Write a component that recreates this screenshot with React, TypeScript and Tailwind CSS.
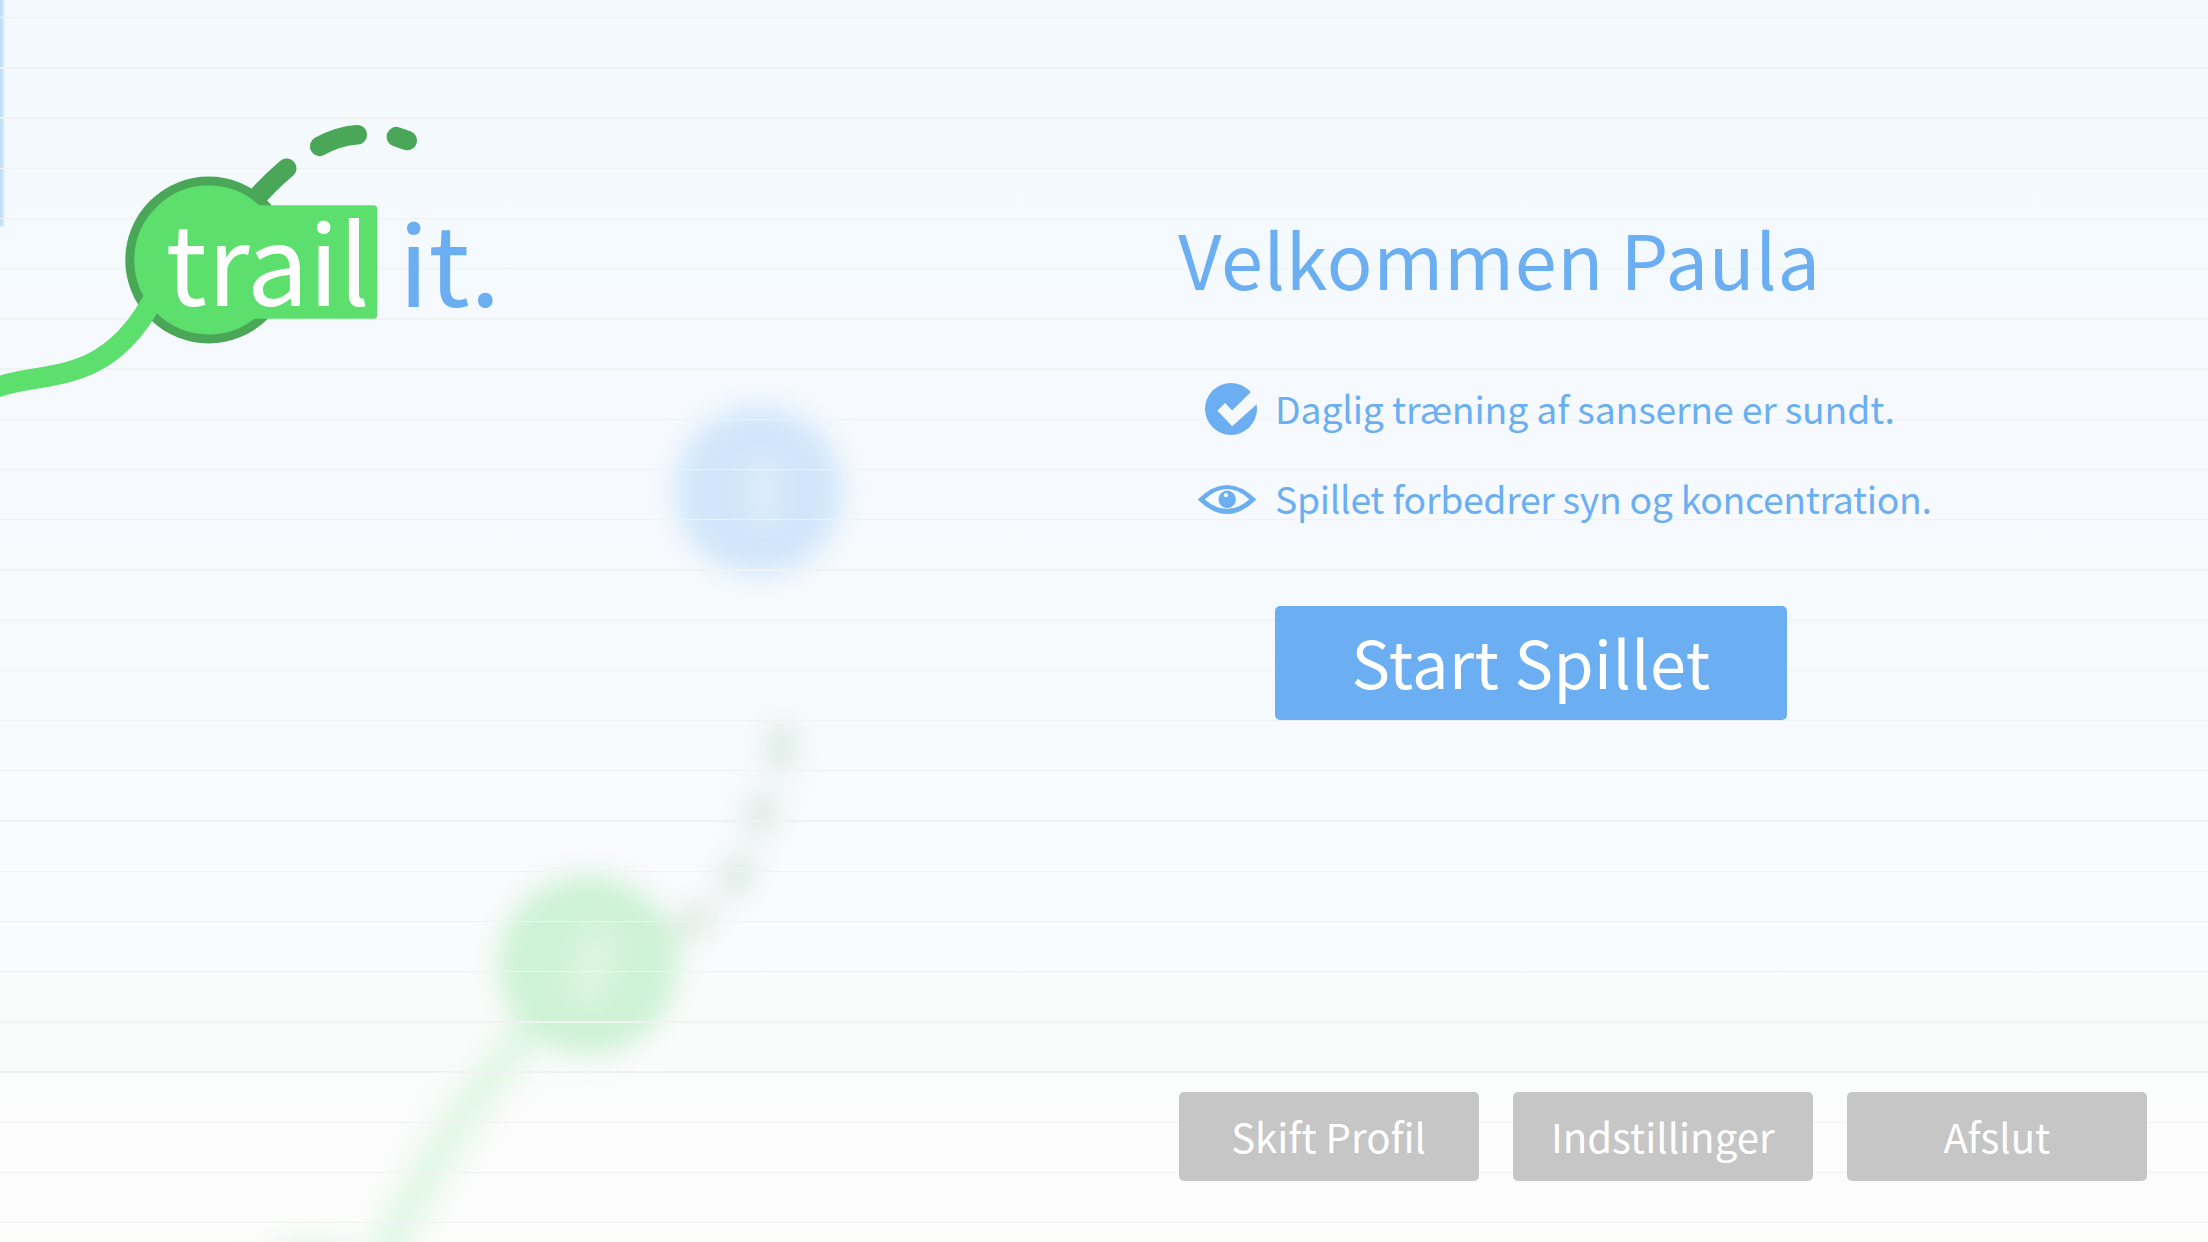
import React from "react";

const blue = "#6baff2";
const green = "#5cdf6d";
const dark = "#4aa757";

function Trail() {
  return (
    <svg className="absolute inset-0" width="2208" height="1242" viewBox="0 0 2208 1242" fill="none" aria-hidden="true">
      <defs>
        <filter id="soft" x="-20%" y="-20%" width="140%" height="140%" colorInterpolationFilters="sRGB">
          <feGaussianBlur stdDeviation="13" />
        </filter>
        <filter id="edge" x="-200%" y="-5%" width="500%" height="110%">
          <feGaussianBlur stdDeviation="1" />
        </filter>
      </defs>
      <g filter="url(#soft)">
        <path d="M672 936 L712 910" stroke="#e1ece5" strokeWidth="30" />
        <path d="M726 894 L748 856" stroke="#dbeae2" strokeWidth="27" />
        <path d="M754 834 L768 794" stroke="#dbeae2" strokeWidth="27" />
        <path d="M778 770 L784 726" stroke="#dbeae2" strokeWidth="28" />
        <path d="M550 1010 Q465 1090 379 1265" stroke="#e0f7e4" strokeWidth="35" />
        <circle cx="758.5" cy="491" r="84" fill="#d1e6fa" />
        <circle cx="588" cy="965" r="90" fill="#cef2d5" />
        <circle cx="312" cy="1328" r="84" fill="#d2f2d8" />
        <path d="M763 462 V522" stroke="#e0effa" strokeWidth="24" />
        <path d="M596 930 Q602 962 579 1000" stroke="#def5e1" strokeWidth="38" />
      </g>
      <rect x="-4" y="-4" width="7.5" height="230" fill="#bfdff7" filter="url(#edge)" />
    </svg>
  );
}

function Logo() {
  return (
    <div className="relative h-[420px] w-[560px] shrink-0">
      <svg className="absolute inset-0" width="560" height="420" viewBox="0 0 560 420" fill="none" aria-hidden="true">
        <g stroke={dark} strokeWidth="19.6" strokeLinecap="round">
          <path d="M250 205 Q268 184 286.7 168.3" />
          <path d="M319.7 146.3 Q338 136 357.3 134.7" />
          <path d="M396.3 136.7 L407.3 140.5" />
        </g>
        <circle cx="208.7" cy="260" r="78.9" fill={green} stroke={dark} strokeWidth="9" />
        <rect x="190" y="205.3" width="187.3" height="113.4" rx="4" fill={green} />
        <path d="M-12 391 C35 368 100 392 150 305 L160 290" stroke={green} strokeWidth="20.6" />
      </svg>
      <div className="absolute left-[165.5px] top-[188px] flex text-[110px] leading-[140px]">
        <span className="text-white">trail</span>
        <span className="ml-[28.5px] mt-px tracking-[-0.6px] text-[#6baff2]">it.</span>
      </div>
    </div>
  );
}

function CheckBadge() {
  return (
    <svg width="60" height="60" viewBox="1200 378 60 60" aria-hidden="true">
      <defs>
        <mask id="tick">
          <rect x="1190" y="370" width="90" height="90" fill="#fff" />
          <path d="M1262 381 L1232.2 410.5 L1225 403 L1217.4 410.7 L1232.2 426.2 L1268 394 Z" fill="#000" />
        </mask>
      </defs>
      <circle cx="1231" cy="408.9" r="26" fill={blue} mask="url(#tick)" />
    </svg>
  );
}

function Eye() {
  return (
    <svg className="overflow-visible" width="60" height="60" viewBox="1200 468 60 60" aria-hidden="true">
      <path
        fillRule="evenodd"
        fill={blue}
        d="M1197.7 499.5 Q1227 470.5 1256.3 499.5 Q1227 528.5 1197.7 499.5 Z M1204.8 499.5 Q1227 478.7 1249.4 499.5 Q1227 518.2 1204.8 499.5 Z"
      />
      <circle cx="1227.2" cy="499.3" r="8.7" fill={blue} />
      <circle cx="1226" cy="495.2" r="2.1" fill="#f5f9fe" />
    </svg>
  );
}

const notes = [
  { icon: <CheckBadge />, text: "Daglig træning af sanserne er sundt.", tracking: "tracking-[-0.18px]" },
  { icon: <Eye />, text: "Spillet forbedrer syn og koncentration.", tracking: "tracking-[-0.32px]" },
];

export default function App() {
  return (
    <div className="relative flex h-[1242px] w-[2208px] overflow-hidden bg-gradient-to-b from-[#f3f9fd] via-[#f7fafd] to-[#fcfcfb] font-['Noto_Sans_CJK_SC','Noto_Sans',sans-serif]">
      <Trail />
      <div className="absolute inset-0 bg-[repeating-linear-gradient(to_bottom,#f0f1f1_0px,#f0f1f1_1.3px,transparent_1.3px,transparent_50.21px)] bg-[position:0_16.5px] bg-no-repeat" />
      <div className="relative flex-1">
        <Logo />
      </div>
      <main className="relative flex w-[1030px] flex-col pr-[61px] pt-[209px]">
        <h1 className="whitespace-nowrap text-[75.6px] leading-[96px] tracking-[0.74px] text-[#6baff2] [word-spacing:-1.4px]">Velkommen Paula</h1>
        <ul className="mt-[73px] flex flex-col gap-[30px]">
          {notes.map((n) => (
            <li key={n.text} className="flex h-[60px] items-center whitespace-nowrap pl-[22px] text-[37.4px] leading-[60px] text-[#6baff2]">
              {n.icon}
              <span className={`ml-[15px] ${n.tracking}`}>{n.text}</span>
            </li>
          ))}
        </ul>
        <button className="ml-[97px] mt-[78px] h-[114px] w-[512px] rounded-[5px] bg-[#6baff2] pb-[3px] text-[64.8px] leading-[111px] tracking-[0.45px] text-white">Start Spillet</button>
        <nav className="ml-[0.5px] mt-[372px] grid grid-cols-3 gap-[34px]">
          {["Skift Profil", "Indstillinger", "Afslut"].map((label) => (
            <button key={label} className="h-[89px] rounded-[5px] bg-[#c6c6c6] pb-[2px] text-[40.2px] leading-[87px] text-white">{label}</button>
          ))}
        </nav>
      </main>
    </div>
  );
}
